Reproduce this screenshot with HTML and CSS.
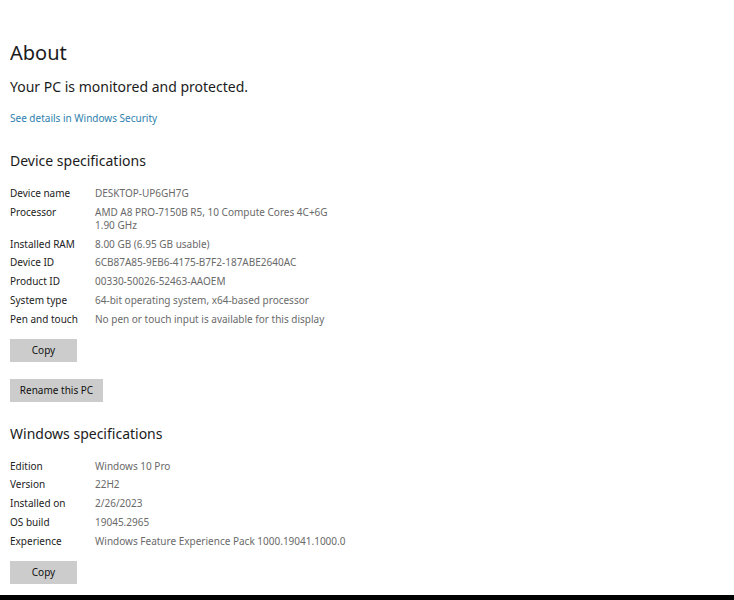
FILE: index.html
```html
<!DOCTYPE html>
<html lang="en">
<head>
  <meta charset="UTF-8">
  <title>About</title>
  <link rel="stylesheet" href="styles.css">
</head>
<body>
  <div id="page">
    <h1 class="title">About</h1>
    <p class="status">Your PC is monitored and protected.</p>
    <a class="link" href="#">See details in Windows Security</a>

    <h2 class="section first">Device specifications</h2>
    <div class="specs">
      <div class="row"><span class="label">Device name</span><span class="value">DESKTOP-UP6GH7G</span></div>
      <div class="row"><span class="label">Processor</span><span class="value">AMD A8 PRO-7150B R5, 10 Compute Cores 4C+6G<br>1.90 GHz</span></div>
      <div class="row"><span class="label">Installed RAM</span><span class="value">8.00 GB (6.95 GB usable)</span></div>
      <div class="row"><span class="label">Device ID</span><span class="value">6CB87A85-9EB6-4175-B7F2-187ABE2640AC</span></div>
      <div class="row"><span class="label">Product ID</span><span class="value">00330-50026-52463-AAOEM</span></div>
      <div class="row"><span class="label">System type</span><span class="value">64-bit operating system, x64-based processor</span></div>
      <div class="row"><span class="label">Pen and touch</span><span class="value">No pen or touch input is available for this display</span></div>
    </div>
    <button class="btn copy">Copy</button>
    <button class="btn rename">Rename this PC</button>

    <h2 class="section">Windows specifications</h2>
    <div class="specs">
      <div class="row"><span class="label">Edition</span><span class="value">Windows 10 Pro</span></div>
      <div class="row"><span class="label">Version</span><span class="value">22H2</span></div>
      <div class="row"><span class="label">Installed on</span><span class="value">2/26/2023</span></div>
      <div class="row"><span class="label">OS build</span><span class="value">19045.2965</span></div>
      <div class="row"><span class="label">Experience</span><span class="value">Windows Feature Experience Pack 1000.19041.1000.0</span></div>
    </div>
    <button class="btn copy">Copy</button>
  </div>
  <div id="taskbar"></div>
</body>
</html>
```

FILE: styles.css
```css
* { box-sizing: border-box; }

body {
  margin: 0;
  height: 600px;
  display: flex;
  flex-direction: column;
  font-family: 'Noto Sans', 'Open Sans', sans-serif;
  background: #ffffff;
  color: #1b1b1b;
}

#page {
  flex-grow: 1;
  display: flex;
  flex-direction: column;
  align-items: flex-start;
  padding: 39px 0 0 10px;
}

.title {
  margin: 0;
  font-size: 20px;
  font-weight: normal;
  line-height: 28px;
}

.status {
  margin: 10px 0 0;
  font-size: 14px;
  line-height: 20px;
}

.link {
  margin-top: 14px;
  font-size: 10px;
  line-height: 14px;
  color: #2e7fae;
  text-decoration: none;
}

.section {
  margin: 22px 0 0;
  font-size: 14px;
  font-weight: normal;
  line-height: 20px;
}

.section.first {
  margin-top: 26px;
}

.specs {
  display: flex;
  flex-direction: column;
  gap: 5.75px;
  margin-top: 16px;
  font-size: 10px;
  line-height: 13px;
}

.row {
  display: flex;
}

.label {
  width: 85px;
  flex-shrink: 0;
  color: #222;
}

.value {
  color: #6a6a6a;
}

.btn {
  font-family: inherit;
  font-size: 10px;
  color: #111;
  background: #cccccc;
  border: none;
  height: 23px;
  padding: 0;
}

.copy {
  width: 67px;
  margin-top: 13px;
}

.rename {
  width: 93px;
  margin-top: 17px;
}

#taskbar {
  height: 5px;
  background: #000;
}
```
